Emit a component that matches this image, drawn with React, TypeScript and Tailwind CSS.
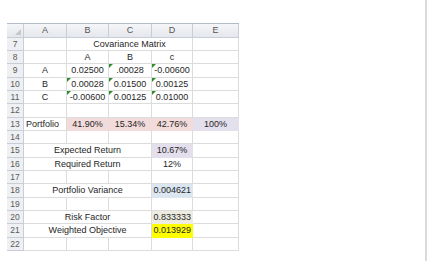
import React from "react";

type Cell = {
    text?: string;
    span?: number;
    align?: "left" | "center" | "right";
    fill?: string;
    tri?: boolean;
};

const colWidths = [43, 42, 43, 41, 46];
const colNames = ["A", "B", "C", "D", "E"];

const rows: { n: number; cells: Cell[] }[] = [
    { n: 7, cells: [{}, { text: "Covariance Matrix", span: 3 }, {}] },
    { n: 8, cells: [{}, { text: "A" }, { text: "B" }, { text: "c" }, {}] },
    { n: 9, cells: [{ text: "A" }, { text: "0.02500" }, { text: ".00028", tri: true }, { text: "-0.00600", tri: true }, {}] },
    { n: 10, cells: [{ text: "B" }, { text: "0.00028", tri: true }, { text: "0.01500", tri: true }, { text: "0.00125", tri: true }, {}] },
    { n: 11, cells: [{ text: "C" }, { text: "-0.00600", tri: true }, { text: "0.00125", tri: true }, { text: "0.01000", tri: true }, {}] },
    { n: 12, cells: [{}, {}, {}, {}, {}] },
    {
        n: 13,
        cells: [
            { text: "Portfolio", align: "left" },
            { text: "41.90%", fill: "bg-[#f2dcdb] border-[#f2dcdb]" },
            { text: "15.34%", fill: "bg-[#f2dcdb] border-[#f2dcdb]" },
            { text: "42.76%", fill: "bg-[#f2dcdb] border-[#f2dcdb]" },
            { text: "100%", fill: "bg-[#e4dfec] border-[#e4dfec]" },
        ],
    },
    { n: 14, cells: [{}, {}, {}, {}, {}] },
    { n: 15, cells: [{ text: "Expected Return", span: 3 }, { text: "10.67%", fill: "bg-[#e4dfec] border-[#e4dfec]" }, {}] },
    { n: 16, cells: [{ text: "Required Return", span: 3 }, { text: "12%" }, {}] },
    { n: 17, cells: [{}, {}, {}, {}, {}] },
    { n: 18, cells: [{ text: "Portfolio Variance", span: 3 }, { text: "0.004621", align: "right", fill: "bg-[#dce6f1] border-[#dce6f1]" }, {}] },
    { n: 19, cells: [{}, {}, {}, {}, {}] },
    { n: 20, cells: [{ text: "Risk Factor", span: 3 }, { text: "0.833333", align: "right", fill: "bg-[#eeece1] border-[#eeece1]" }, {}] },
    { n: 21, cells: [{ text: "Weighted Objective", span: 3 }, { text: "0.013929", align: "right", fill: "bg-[#ffff00] border-[#ffff00]" }, {}] },
    { n: 22, cells: [{}, {}, {}, {}, {}] },
];

function Row({ n, cells, tall }: { n: number; cells: Cell[]; tall: boolean }) {
    let col = 0;
    return (
        <div className={`flex ${tall ? "h-[14px]" : "h-[13px]"}`}>
            <div className="flex w-[17px] shrink-0 items-center justify-center border-r border-b border-[#c9ced6] bg-[#eef0f3] text-[8.5px] text-[#5a5a5a]">
                {n}
            </div>
            {cells.map((c, i) => {
                const span = c.span ?? 1;
                const w = colWidths.slice(col, col + span).reduce((a, b) => a + b, 0);
                col += span;
                const align =
                    c.align === "left" ? "justify-start pl-[2px]" : c.align === "right" ? "justify-end pr-[1px]" : "justify-center";
                return (
                    <div
                        key={i}
                        className={`relative flex shrink-0 items-center whitespace-nowrap border-r border-b text-[#262626] ${align} ${c.fill ?? "border-[#dcdcdc]"}`}
                        style={{ width: w }}
                    >
                        {c.tri ? (
                            <span className="absolute left-0 top-0 h-0 w-0 border-t-[4px] border-r-[4px] border-t-[#2e8b2e] border-r-transparent" />
                        ) : null}
                        {c.text}
                    </div>
                );
            })}
        </div>
    );
}

export default function App() {
    return (
        <div className="flex h-[261px] w-[433px] bg-white text-[9px] leading-none" style={{ fontFamily: '"Liberation Sans", Arial, sans-serif' }}>
            <div className="ml-[7px] mt-[23px] flex flex-col">
                {/* Column headers */}
                <div className="flex h-[15px] border-t border-[#b4bcc8] bg-gradient-to-b from-[#f5f6f8] to-[#e3e6eb] text-[#555]">
                    <div className="relative w-[17px] shrink-0 border-r border-b border-[#c9ced6]">
                        <span className="absolute right-[2px] bottom-[2px] h-0 w-0 border-b-[6px] border-l-[6px] border-b-[#c3c7cd] border-l-transparent" />
                    </div>
                    {colNames.map((c, i) => (
                        <div
                            key={c}
                            className="flex shrink-0 items-center justify-center border-r border-b border-[#c9ced6]"
                            style={{ width: colWidths[i] }}
                        >
                            {c}
                        </div>
                    ))}
                </div>
                {rows.map((r, i) => (
                    <Row key={r.n} n={r.n} cells={r.cells} tall={i % 3 === 2} />
                ))}
            </div>
            <div className="flex-1" />
            <div className="mr-[6px] w-[2px] bg-[#dadada]" />
        </div>
    );
}
